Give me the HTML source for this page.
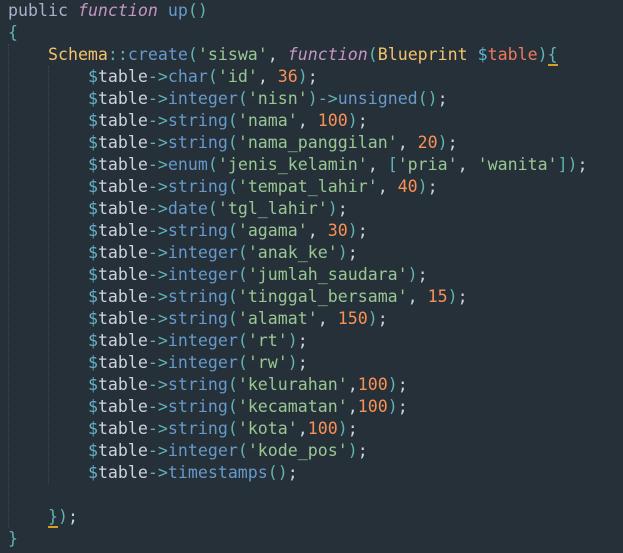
<!DOCTYPE html>
<html><head><meta charset="utf-8"><style>
html,body{margin:0;padding:0;background:#263038;width:623px;height:553px;overflow:hidden}
pre{margin:0;position:absolute;left:8px;top:0;font-family:"DejaVu Sans Mono","Liberation Mono",monospace;font-size:16.6px;line-height:22px;color:#cdd3de;white-space:pre}
.k{color:#a7b0cc}.f{color:#c594c5;font-style:italic}.y{color:#f5c26b}.b{color:#6699cc}.p{color:#5fb3b3}.s{color:#99c794}.n{color:#f99157}.r{color:#ec7a5a}.d{color:#62b3c9}
.u{border-bottom:2px solid #d4a020}
.g{position:absolute;width:0;border-left:1px dotted #3c4852}
</style></head><body>
<div class="g" style="left:8px;top:44px;height:484px"></div>
<div class="g" style="left:48px;top:66px;height:418px"></div>
<pre><span class="k">public</span> <span class="f">function</span> <span class="b">up</span><span class="p">()</span>
<span class="p">{</span>
    <span class="y">Schema</span><span class="p">::</span><span class="b">create</span><span class="p">(</span><span class="s">'siswa'</span>, <span class="f">function</span><span class="p">(</span><span class="y">Blueprint</span> <span class="d">$</span><span class="r">table</span><span class="p">)</span><span class="p u">{</span>
        <span class="d">$</span>table<span class="p">-&gt;</span><span class="b">char</span><span class="p">(</span><span class="s">'id'</span>, <span class="n">36</span><span class="p">)</span>;
        <span class="d">$</span>table<span class="p">-&gt;</span><span class="b">integer</span><span class="p">(</span><span class="s">'nisn'</span><span class="p">)-&gt;</span><span class="b">unsigned</span><span class="p">()</span>;
        <span class="d">$</span>table<span class="p">-&gt;</span><span class="b">string</span><span class="p">(</span><span class="s">'nama'</span>, <span class="n">100</span><span class="p">)</span>;
        <span class="d">$</span>table<span class="p">-&gt;</span><span class="b">string</span><span class="p">(</span><span class="s">'nama_panggilan'</span>, <span class="n">20</span><span class="p">)</span>;
        <span class="d">$</span>table<span class="p">-&gt;</span><span class="b">enum</span><span class="p">(</span><span class="s">'jenis_kelamin'</span>, <span class="p">[</span><span class="s">'pria'</span>, <span class="s">'wanita'</span><span class="p">])</span>;
        <span class="d">$</span>table<span class="p">-&gt;</span><span class="b">string</span><span class="p">(</span><span class="s">'tempat_lahir'</span>, <span class="n">40</span><span class="p">)</span>;
        <span class="d">$</span>table<span class="p">-&gt;</span><span class="b">date</span><span class="p">(</span><span class="s">'tgl_lahir'</span><span class="p">)</span>;
        <span class="d">$</span>table<span class="p">-&gt;</span><span class="b">string</span><span class="p">(</span><span class="s">'agama'</span>, <span class="n">30</span><span class="p">)</span>;
        <span class="d">$</span>table<span class="p">-&gt;</span><span class="b">integer</span><span class="p">(</span><span class="s">'anak_ke'</span><span class="p">)</span>;
        <span class="d">$</span>table<span class="p">-&gt;</span><span class="b">integer</span><span class="p">(</span><span class="s">'jumlah_saudara'</span><span class="p">)</span>;
        <span class="d">$</span>table<span class="p">-&gt;</span><span class="b">string</span><span class="p">(</span><span class="s">'tinggal_bersama'</span>, <span class="n">15</span><span class="p">)</span>;
        <span class="d">$</span>table<span class="p">-&gt;</span><span class="b">string</span><span class="p">(</span><span class="s">'alamat'</span>, <span class="n">150</span><span class="p">)</span>;
        <span class="d">$</span>table<span class="p">-&gt;</span><span class="b">integer</span><span class="p">(</span><span class="s">'rt'</span><span class="p">)</span>;
        <span class="d">$</span>table<span class="p">-&gt;</span><span class="b">integer</span><span class="p">(</span><span class="s">'rw'</span><span class="p">)</span>;
        <span class="d">$</span>table<span class="p">-&gt;</span><span class="b">string</span><span class="p">(</span><span class="s">'kelurahan'</span>,<span class="n">100</span><span class="p">)</span>;
        <span class="d">$</span>table<span class="p">-&gt;</span><span class="b">string</span><span class="p">(</span><span class="s">'kecamatan'</span>,<span class="n">100</span><span class="p">)</span>;
        <span class="d">$</span>table<span class="p">-&gt;</span><span class="b">string</span><span class="p">(</span><span class="s">'kota'</span>,<span class="n">100</span><span class="p">)</span>;
        <span class="d">$</span>table<span class="p">-&gt;</span><span class="b">integer</span><span class="p">(</span><span class="s">'kode_pos'</span><span class="p">)</span>;
        <span class="d">$</span>table<span class="p">-&gt;</span><span class="b">timestamps</span><span class="p">()</span>;

    <span class="p u">}</span><span class="p">)</span>;
<span class="p">}</span></pre>
</body></html>
